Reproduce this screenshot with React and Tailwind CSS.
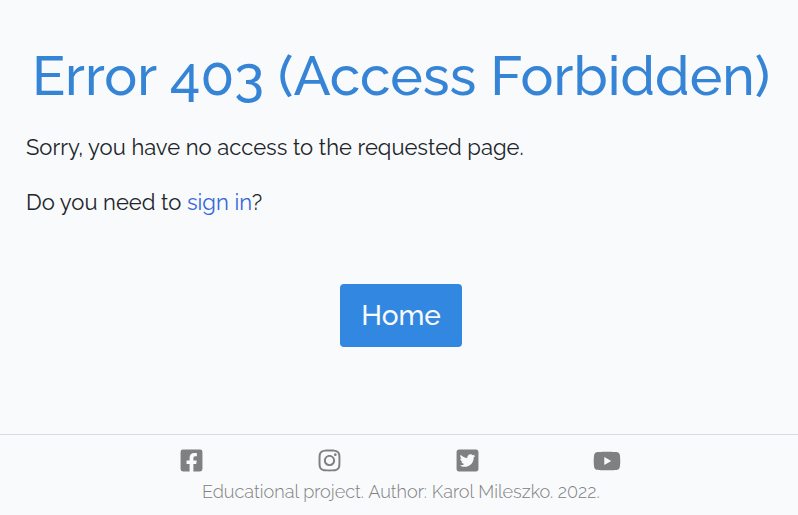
import { FaFacebookSquare, FaInstagram, FaTwitterSquare, FaYoutube } from "react-icons/fa";

export default function App() {
  return (
    <div className="flex h-[515px] w-[798px] flex-col overflow-hidden bg-[#f8fafc] font-['Raleway','Lato',sans-serif] text-[#212529]">
      <main className="flex h-[434px] flex-col pl-[26px] whitespace-nowrap">
        <h1 className="mt-[42px] ml-[6px] h-[67px] text-[55px] leading-[67px] font-medium text-[#3684d6]">
          Error 403 (Access Forbidden)
        </h1>
        <p className="mt-[21px] h-[34px] text-[22px] leading-[34px]">Sorry, you have no access to the requested page.</p>
        <p className="mt-[21px] h-[34px] text-[22px] leading-[34px]">
          Do you need to <a className="text-[#3468d8]">sign in</a>?
        </p>
        <a className="mt-[65px] ml-[314px] flex h-[63px] w-[122px] items-center justify-center rounded-[4px] bg-[#3288e0] text-[28px] font-medium text-[#f8fafc]">
          Home
        </a>
      </main>
      <footer className="flex h-[81px] flex-col border-t border-[#d8dce0] text-[#808080]">
        <div className="mt-[13px] ml-[122px] grid h-[25px] w-[552px] grid-cols-4 grid-rows-[25px] items-center justify-items-center text-[25px]">
          <FaFacebookSquare />
          <FaInstagram />
          <FaTwitterSquare />
          <FaYoutube className="ml-[3px] -my-1 text-[28px]" />
        </div>
        <p className="mt-[5px] ml-[202px] h-[27px] text-[18.1px] leading-[27px] font-light whitespace-nowrap">
          Educational project. Author: Karol Mileszko. 2022.
        </p>
      </footer>
    </div>
  );
}
